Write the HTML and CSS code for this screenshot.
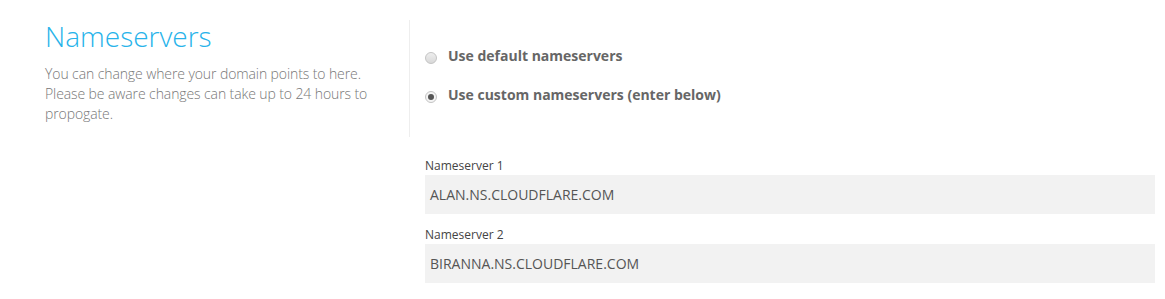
FILE: index.html
```html
<!DOCTYPE html>
<html>
<head>
<meta charset="utf-8">
<link rel="stylesheet" href="styles.css">
</head>
<body>
<div class="page">
  <div class="top">
    <div class="intro">
      <h1 class="title">Nameservers</h1>
      <p class="desc">You can change where your domain points to here. Please be aware changes can take up to 24 hours to propogate.</p>
    </div>
    <div class="options">
      <label class="option"><span class="radio"></span><span class="opt-text">Use default nameservers</span></label>
      <label class="option"><span class="radio checked"></span><span class="opt-text">Use custom nameservers (enter below)</span></label>
    </div>
  </div>
  <div class="fields">
    <div class="field">
      <div class="label">Nameserver 1</div>
      <div class="input">ALAN.NS.CLOUDFLARE.COM</div>
    </div>
    <div class="field">
      <div class="label">Nameserver 2</div>
      <div class="input">BIRANNA.NS.CLOUDFLARE.COM</div>
    </div>
    <div class="field">
      <div class="label">Nameserver 3</div>
      <div class="input"></div>
    </div>
  </div>
</div>
</body>
</html>
```
FILE: styles.css
```css
html, body {
  margin: 0;
  padding: 0;
  background: #fff;
  overflow: hidden;
}
body {
  font-family: "Open Sans", "Liberation Sans", sans-serif;
}
.page {
  width: 1165px;
}
.top {
  display: flex;
  padding-top: 20px;
}
.intro {
  flex: none;
  width: 409px;
  padding-left: 45px;
  box-sizing: border-box;
}
.title {
  margin: 0;
  font-weight: 300;
  font-size: 28px;
  line-height: 32px;
  color: #27b3ea;
}
.desc {
  margin: 12px 0 0;
  width: 332px;
  font-weight: 300;
  font-size: 14px;
  line-height: 20px;
  color: #777;
  letter-spacing: -0.1px;
}
.options {
  flex: none;
  border-left: 1px solid #eeeeee;
  padding: 25px 0 27px 15px;
  height: 65px;
  display: flex;
  flex-direction: column;
  gap: 19px;
}
.option {
  display: flex;
  align-items: center;
  height: 20px;
}
.radio {
  width: 10px;
  height: 10px;
  border-radius: 50%;
  border: 1px solid #c4c4c4;
  background: linear-gradient(#eee, #d8d8d8);
  margin-right: 11px;
  margin-top: 6px;
  position: relative;
  flex: none;
}
.radio.checked {
  background: #f4f4f4;
}
.radio.checked::after {
  content: "";
  position: absolute;
  left: 2px;
  top: 2px;
  width: 6px;
  height: 6px;
  border-radius: 50%;
  background: #555;
}
.opt-text {
  font-weight: 700;
  font-size: 14px;
  color: #666;
}
.fields {
  margin-left: 425px;
  width: 730px;
  padding-top: 20px;
}
.field {
  margin-bottom: 12px;
}
.label {
  font-size: 12px;
  line-height: 17px;
  color: #444;
  margin-bottom: 1px;
}
.input {
  height: 39px;
  background: #f2f2f2;
  box-sizing: border-box;
  padding: 0 5px;
  font-size: 14px;
  line-height: 39px;
  color: #555;
}
```
